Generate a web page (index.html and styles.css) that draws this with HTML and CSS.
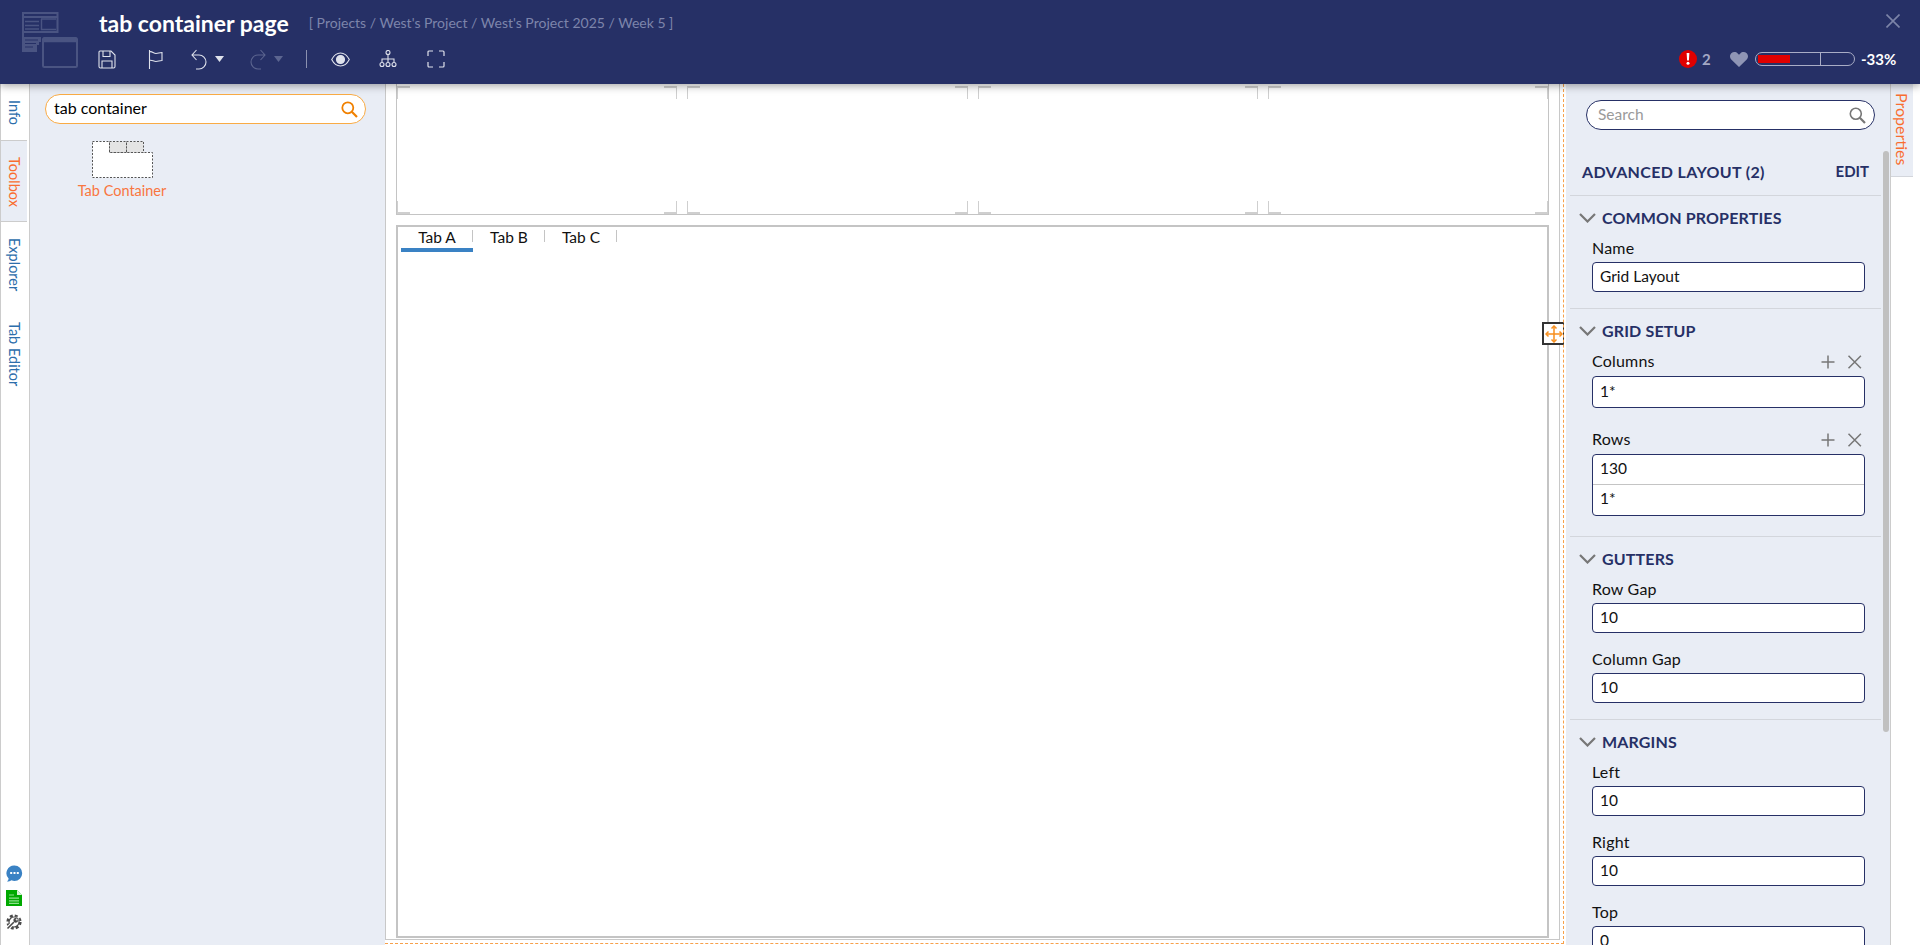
FILE: index.html
```html
<!DOCTYPE html>
<html lang="en">
<head>
<meta charset="utf-8">
<title>tab container page</title>
<link rel="stylesheet" href="styles.css">
</head>
<body>
<header class="topbar">
  <svg class="logo" width="56" height="56" viewBox="0 0 56 56" fill="none" stroke="#4a5482">
    <path d="M1 1h35M1 5h35" stroke-width="2"/>
    <path d="M1 0v40M35.500 0v21M1 20h34" stroke-width="2"/>
    <path d="M3 9.500h14M3 13.500h14M3 17h14M19 7h15M19 17.500h15M19.500 7v11" stroke-width="1.400"/>
    <path d="M0 25h19v5h-2v3h-2v7H0z" fill="#4a5482" stroke="none"/>
    <path d="M3 28h13M3 31.500h11M3 35h8" stroke="#263066" stroke-width="1.200"/>
    <rect x="21" y="26" width="34" height="29" rx="1.500" fill="#263066" stroke-width="2"/>
    <path d="M21 28h34" stroke-width="4.500"/>
  </svg>
  <div class="top-main">
    <div class="title-row">
      <h1 class="page-title">tab container page</h1>
      <span class="crumbs">[ Projects / West's Project / West's Project 2025 / Week 5 ]</span>
    </div>
    <div class="toolbar">
      <svg class="tool" width="18" height="19" viewBox="0 0 18 19" fill="none" stroke="#dfe2ec" stroke-width="1.100"><path d="M2 1h11l4 4v11.500a1.500 1.500 0 0 1-1.500 1.500h-13A1.500 1.500 0 0 1 1 16.500V2a1 1 0 0 1 1-1z"/><path d="M5 1v5.500h7V1M4 18v-7h10v7"/></svg>
      <svg class="tool" width="16" height="19" viewBox="0 0 16 19" fill="none" stroke="#dfe2ec" stroke-width="1.100"><path d="M1.500 0v19M1.500 2c2-1.500 4 1.500 6.500 1.500 2.500 0 3-1 6-1v8c-3 0-3.500 1-6 1s-4.500-2-6.500-1"/></svg>
      <svg class="tool" width="16" height="21" viewBox="0 0 16 21" fill="none" stroke="#dfe2ec" stroke-width="1.100"><path d="M5.500 1 1 6l4.500 5M1 6h7a7 7 0 0 1 0 14H5"/></svg>
      <svg class="tool" width="9" height="6" viewBox="0 0 9 6"><path d="M0 0h9L4.500 6z" fill="#dfe2ec"/></svg>
      <svg class="tool" width="16" height="21" viewBox="0 0 16 21" fill="none" stroke="#5c6590" stroke-width="1.100"><path d="M10.500 1 15 6l-4.500 5M15 6H8a7 7 0 0 0 0 14h3"/></svg>
      <svg class="tool" width="9" height="6" viewBox="0 0 9 6"><path d="M0 0h9L4.500 6z" fill="#5c6590"/></svg>
      <span class="tool-sep"></span>
      <svg class="tool" width="19" height="15" viewBox="0 0 19 15" fill="none" stroke="#dfe2ec" stroke-width="1.100"><path d="M.7 7.500C3 3 6 1 9.500 1s6.500 2 8.800 6.500C16 12 13 14 9.500 14S3 12 .7 7.500z"/><circle cx="9.500" cy="7.500" r="4" fill="#dfe2ec"/></svg>
      <svg class="tool" width="18" height="18" viewBox="0 0 18 18" fill="none" stroke="#dfe2ec" stroke-width="1.100"><circle cx="9" cy="2.500" r="2"/><path d="M9 4.500V9M3 12V9h12v3M9 9v3"/><circle cx="3" cy="14.500" r="2"/><circle cx="9" cy="14.500" r="2"/><circle cx="15" cy="14.500" r="2"/></svg>
      <svg class="tool" width="18" height="18" viewBox="0 0 18 18" fill="none" stroke="#dfe2ec" stroke-width="1.200"><path d="M1 6V2a1 1 0 0 1 1-1h4M12 1h4a1 1 0 0 1 1 1v4M17 12v4a1 1 0 0 1-1 1h-4M6 17H2a1 1 0 0 1-1-1v-4"/></svg>
    </div>
  </div>
  <div class="top-side">
    <svg class="close-x" width="14" height="14" viewBox="0 0 14 14" stroke="#7c84a8" stroke-width="1.600"><path d="M.5.5l13 13M13.500.5l-13 13"/></svg>
    <div class="status">
      <svg width="18" height="18" viewBox="0 0 18 18"><circle cx="9" cy="9" r="9" fill="#e00000"/><path d="M7.600 3h2.800l-.5 7.500H8.100z" fill="#fff"/><circle cx="9" cy="13.200" r="1.500" fill="#fff"/></svg>
      <span class="alert-count">2</span>
      <svg class="heart" width="18" height="15" viewBox="0 0 18 15"><path d="M9 15 1.500 7.800C-.5 5.800-.4 2.900 1.300 1.300 3.100-.4 6-.3 7.700 1.400L9 2.800l1.300-1.400C12-.3 14.900-.4 16.700 1.300c1.700 1.600 1.800 4.500-.2 6.500z" fill="#8f95b5"/></svg>
      <div class="meter"><span class="meter-fill"></span><span class="meter-tick"></span></div>
      <span class="pct">-33%</span>
    </div>
  </div>
</header>

<main class="workspace">
  <nav class="rail">
    <a class="rail-tab rail-info">Info</a>
    <a class="rail-tab rail-active rail-toolbox">Toolbox</a>
    <a class="rail-tab rail-explorer">Explorer</a>
    <a class="rail-tab rail-editor">Tab Editor</a>
    <div class="rail-icons">
      <svg width="17" height="17" viewBox="0 0 17 17"><path d="M8.500.5a7.700 7.700 0 0 1 0 15.400c-1 0-2-.2-3-.6-1.200.9-2.600 1.200-4.500 1.200 1-.8 1.500-1.800 1.600-3A7.700 7.700 0 0 1 8.500.5z" fill="#3a82c4"/><path d="M4.200 7h2v2h-2zM7.500 7h2v2h-2zM10.800 7h2v2h-2z" fill="#fff"/></svg>
      <svg width="16" height="16" viewBox="0 0 16 16"><path d="M0 0h11l5 5v11H0z" fill="#00a900"/><path d="M11 0v5h5z" fill="#d6f2d6"/><path d="M3 4.500h5v1H3zM3 7.500h10v1.300H3zM3 10.200h10v1.300H3zM3 12.800h10v1.300H3z" fill="#8ee08e"/></svg>
      <svg width="16" height="16" viewBox="0 0 16 16" fill="none"><circle cx="8" cy="8" r="6.300" stroke="#4a4a4a" stroke-width="2.600" stroke-dasharray="2.900 2.050"/><circle cx="8" cy="8" r="5" stroke="#4a4a4a" stroke-width="1.200"/><path d="M1 15 8 8" stroke="#fff" stroke-width="3.800"/><path d="M1.500 14.500 8 8" stroke="#4a4a4a" stroke-width="1.600"/><path d="M7.200 7.300a3.400 3.400 0 0 1 4.700-3.900L10 5.400l.8 1 2-1.800a3.400 3.400 0 0 1-3.900 4.300z" fill="#4a4a4a" stroke="#fff" stroke-width=".5"/></svg>
    </div>
  </nav>

  <aside class="toolbox">
    <div class="tool-search">
      <span class="tool-search-text">tab container</span>
      <svg width="17" height="17" viewBox="0 0 17 17" fill="none" stroke="#f08000" stroke-width="1.800"><circle cx="6.800" cy="6.800" r="5.500"/><path d="M10.800 10.800 16 16" stroke-width="2.200"/></svg>
    </div>
    <div class="tool-item">
      <svg class="tc-icon" width="61" height="37" viewBox="0 0 61 37" stroke="#555" stroke-dasharray="2 1.500">
        <path d="M.5.500h17v11h43v25H.5z" fill="#fff"/>
        <rect x="17.500" y=".5" width="17" height="11" fill="#e4e4e4"/>
        <rect x="34.500" y=".5" width="17" height="11" fill="#e4e4e4"/>
      </svg>
      <span class="tool-item-label">Tab Container</span>
    </div>
  </aside>

  <section class="canvas">
    <div class="page">
      <div class="upper">
        <div class="cell"><i class="mk tl"></i><i class="mk tr"></i><i class="mk bl"></i><i class="mk br"></i></div>
        <div class="cell"><i class="mk tl"></i><i class="mk tr"></i><i class="mk bl"></i><i class="mk br"></i></div>
        <div class="cell"><i class="mk tl"></i><i class="mk tr"></i><i class="mk bl"></i><i class="mk br"></i></div>
        <div class="cell"><i class="mk tl"></i><i class="mk tr"></i><i class="mk bl"></i><i class="mk br"></i></div>
      </div>
      <div class="lower">
        <div class="tabs">
          <span class="tab tab-on">Tab A</span>
          <span class="tab">Tab B</span>
          <span class="tab">Tab C</span>
        </div>
      </div>
    </div>
    <div class="mover">
      <svg width="18" height="18" viewBox="0 0 18 18" fill="none" stroke="#f78f1e" stroke-width="1.500"><path d="M1.500 9h15M9 1.500v15"/><path d="M6.500 3.500 9 1l2.500 2.500M6.500 14.500 9 17l2.500-2.500M3.500 6.500 1 9l2.500 2.500M14.500 6.500 17 9l-2.500 2.500"/></svg>
    </div>
  </section>

  <aside class="props">
    <div class="prop-search">
      <span class="prop-search-text">Search</span>
      <svg width="17" height="17" viewBox="0 0 17 17" fill="none" stroke="#777" stroke-width="1.600"><circle cx="6.800" cy="6.800" r="5.500"/><path d="M10.800 10.800 16 16" stroke-width="2.200"/></svg>
    </div>
    <div class="prop-title">
      <h2 class="prop-heading">ADVANCED LAYOUT (2)</h2>
      <span class="prop-edit">EDIT</span>
    </div>

    <section class="group">
      <h3 class="group-head"><svg class="chev" width="17" height="10" viewBox="0 0 17 10" fill="none" stroke="#777" stroke-width="2.200"><path d="M1 1l7.500 7.500L16 1"/></svg>COMMON PROPERTIES</h3>
      <div class="field"><label class="label">Name</label><div class="input">Grid Layout</div></div>
    </section>

    <section class="group">
      <h3 class="group-head"><svg class="chev" width="17" height="10" viewBox="0 0 17 10" fill="none" stroke="#777" stroke-width="2.200"><path d="M1 1l7.500 7.500L16 1"/></svg>GRID SETUP</h3>
      <div class="field field-grid">
        <div class="label-row"><label class="label">Columns</label>
          <svg width="41" height="14" viewBox="0 0 41 14" fill="none" stroke="#777" stroke-width="1.500"><path d="M7 .5v13M.5 7h13M27.500.8l12.400 12.400M39.900.8 27.500 13.200"/></svg></div>
        <div class="input input-tall">1*</div>
      </div>
      <div class="field field-grid">
        <div class="label-row"><label class="label">Rows</label>
          <svg width="41" height="14" viewBox="0 0 41 14" fill="none" stroke="#777" stroke-width="1.500"><path d="M7 .5v13M.5 7h13M27.500.8l12.400 12.400M39.900.8 27.500 13.200"/></svg></div>
        <div class="list"><div class="list-item">130</div><div class="list-item">1*</div></div>
      </div>
    </section>

    <section class="group">
      <h3 class="group-head"><svg class="chev" width="17" height="10" viewBox="0 0 17 10" fill="none" stroke="#777" stroke-width="2.200"><path d="M1 1l7.500 7.500L16 1"/></svg>GUTTERS</h3>
      <div class="field"><label class="label">Row Gap</label><div class="input">10</div></div>
      <div class="field"><label class="label">Column Gap</label><div class="input">10</div></div>
    </section>

    <section class="group">
      <h3 class="group-head"><svg class="chev" width="17" height="10" viewBox="0 0 17 10" fill="none" stroke="#777" stroke-width="2.200"><path d="M1 1l7.500 7.500L16 1"/></svg>MARGINS</h3>
      <div class="field"><label class="label">Left</label><div class="input">10</div></div>
      <div class="field"><label class="label">Right</label><div class="input">10</div></div>
      <div class="field"><label class="label">Top</label><div class="input">0</div></div>
    </section>
    <div class="scrollbar"></div>
  </aside>

  <nav class="rail-right">
    <a class="rail-right-tab">Properties</a>
  </nav>
</main>
</body>
</html>
```

FILE: styles.css
```css
* { box-sizing: border-box; }
html, body { margin: 0; height: 100%; overflow: hidden; }
body {
  display: flex;
  flex-direction: column;
  height: 945px;
  font-family: "Lato", "Noto Sans", sans-serif;
  font-size: 15px;
  color: #111;
  background: #fff;
}
h1, h2, h3 { margin: 0; }

/* Header */
.topbar {
  position: relative;
  z-index: 5;
  display: flex;
  flex: 0 0 84px;
  background: #263066;
  box-shadow: 0 2px 8px rgba(0, 0, 0, .35);
}
.logo { flex: none; margin: 12px 0 0 22px; }
.top-main { margin-left: 20px; }
.title-row { display: flex; align-items: center; height: 46px; padding-left: 1px; }
.page-title { font-size: 23px; font-weight: 700; color: #fff; line-height: 30px; }
.crumbs { margin: 0 0 2px 20px; font-size: 14px; color: #7d85ab; white-space: nowrap; }
.toolbar {
  display: grid;
  grid-template-columns: 50px 43px 24px 35px 24px 32px 25px 48px 48px 18px;
  align-items: center;
  height: 26px;
}
.tool { display: block; }
.tool-sep { width: 1px; height: 18px; background: #8b91b0; }
.top-side { display: flex; flex-direction: column; align-items: flex-end; margin-left: auto; padding: 14px 20px 0 0; }
.close-x { display: block; }
.status { display: flex; align-items: center; height: 18px; margin: 22px 3px 0 0; }
.alert-count { width: 33px; padding-left: 5px; font-size: 15px; font-weight: 700; color: #a3a8c4; }
.meter {
  position: relative;
  width: 100px;
  height: 14px;
  margin-left: 7px;
  border: 1px solid #a9adc6;
  border-radius: 7px;
}
.meter-fill { position: absolute; left: 2px; top: 2px; width: 32px; height: 8px; background: #e00000; }
.meter-tick { position: absolute; left: 64px; top: 0; width: 1px; height: 12px; background: #a9adc6; }
.pct { width: 36px; margin-left: 6px; font-size: 15px; font-weight: 700; color: #fff; white-space: nowrap; }

/* Workspace */
.workspace { display: flex; flex: 1; min-height: 0; }

.rail {
  position: relative;
  flex: 0 0 30px;
  border-left: 1px solid #ccc;
  border-right: 1px solid #ccc;
  background: #fff;
}
.rail-tab {
  display: block;
  writing-mode: vertical-rl;
  font-size: 14.500px;
  line-height: 26px;
  color: #2d6eab;
  text-align: left;
}
.rail-info { height: 56px; padding-top: 16px; }
.rail-toolbox { height: 82px; padding-top: 16px; }
.rail-explorer { height: 84px; padding-top: 16px; }
.rail-editor { padding-top: 16px; }
.rail-active { color: #f96d30; background: #e9edf5; border-top: 1px solid #ccc; border-bottom: 1px solid #ccc; }
.rail-icons { position: absolute; left: 5px; bottom: 15px; display: flex; flex-direction: column; gap: 8px; }
.rail-icons svg { display: block; }

.toolbox {
  flex: 0 0 355px;
  padding: 10px 0 0 15px;
  background: #e9edf5;
}
.tool-search {
  display: flex;
  align-items: center;
  justify-content: space-between;
  width: 321px;
  height: 30px;
  padding: 0 7px 0 8px;
  background: #fff;
  border: 1px solid #f9ab45;
  border-radius: 15px;
}
.tool-search-text { padding-bottom: 3px; font-size: 16px; color: #000; }
.tool-item { display: flex; flex-direction: column; align-items: center; width: 90px; margin: 17px 0 0 32px; }
.tc-icon { display: block; }
.tool-item-label { margin-top: 3px; font-size: 14.500px; line-height: 20px; color: #f9763f; white-space: nowrap; }

/* Canvas */
.canvas { position: relative; display: flex; flex: 1; min-width: 0; padding-right: 6px; background: #fff; }
.page {
  display: grid;
  grid-template-rows: 131px 1fr;
  row-gap: 10px;
  flex: 1;
  min-width: 0;
  height: 856px;
  padding: 0 10px 1px 10px;
  border-left: 1px solid #c8c8c8;
  border-right: 1px solid #c8c8c8;
  border-bottom: 1px solid #c8c8c8;
}
.canvas::after {
  content: "";
  position: absolute;
  left: 0;
  right: 2px;
  top: 0;
  bottom: 1px;
  border-right: 1px dashed #f7a04a;
  border-bottom: 1px dashed #f7a04a;
  pointer-events: none;
}
.upper {
  display: grid;
  grid-template-columns: repeat(4, 1fr);
  column-gap: 10px;
  border-left: 1px solid #c4c4c4;
  border-right: 1px solid #c4c4c4;
  border-bottom: 1px solid #c4c4c4;
}
.cell { position: relative; }
.mk { position: absolute; width: 13px; height: 13px; border: 0 solid #cfcfcf; }
.tl { left: 0; top: 2px; border-top-width: 2px; border-left-width: 1px; }
.tr { right: 0; top: 2px; border-top-width: 2px; border-right-width: 1px; }
.bl { left: 0; bottom: 0; border-bottom-width: 2px; border-left-width: 1px; }
.br { right: 0; bottom: 0; border-bottom-width: 2px; border-right-width: 1px; }
.lower { border: 2px solid #c4c4c4; padding: 3px 0 0 3px; }
.tabs { display: flex; }
.tab {
  position: relative;
  width: 72px;
  height: 22px;
  font-size: 15.500px;
  line-height: 14px;
  text-align: center;
  color: #111;
}
.tab::after { content: ""; position: absolute; right: 0; top: 0; width: 1px; height: 12px; background: #c4c4c4; }
.tab-on { border-bottom: 4px solid #3a82c4; }
.mover {
  position: absolute;
  left: 1157px;
  top: 238px;
  display: flex;
  align-items: center;
  justify-content: center;
  width: 22px;
  height: 23px;
  background: #fff;
  border: 2px solid #333;
  border-right-width: 1px;
}

/* Properties */
.props {
  position: relative;
  flex: 0 0 325px;
  overflow: hidden;
  background: #e9edf5;
  border-right: 1px solid #ccc;
}
.prop-search {
  display: flex;
  align-items: center;
  justify-content: space-between;
  width: 289px;
  height: 30px;
  margin: 16px 0 0 20px;
  padding: 0 8px 0 11px;
  background: #fff;
  border: 1px solid #263066;
  border-radius: 15px;
}
.prop-search-text { padding-bottom: 2px; font-size: 15.500px; color: #9a9a9a; }
.prop-title {
  display: flex;
  align-items: center;
  justify-content: space-between;
  height: 24px;
  margin-top: 29px;
  padding: 0 21px 0 16px;
  margin-bottom: 12px;
  color: #263066;
}
.prop-heading { font-size: 16px; font-weight: 700; letter-spacing: .35px; }
.prop-edit { font-size: 15px; font-weight: 700; }
.group { margin: 0 9px 0 4px; border-top: 1px solid #d3d6dc; }
.group-head {
  display: flex;
  align-items: center;
  height: 20px;
  margin: 12px 0 10px 9px;
  padding-bottom: 2px;
  font-size: 16px;
  font-weight: 700;
  letter-spacing: .15px;
  color: #263066;
}
.chev { flex: none; margin: 2px 6px 0 0; }
.field { margin: 0 16px 16px 22px; }
.label { display: block; height: 20px; margin-bottom: 4px; font-size: 16px; line-height: 20px; letter-spacing: .2px; color: #111; }
.input {
  height: 30px;
  padding: 0 7px;
  background: #fff;
  border: 1px solid #263066;
  border-radius: 4px;
  font-size: 15.500px;
  line-height: 27px;
}
.input-tall { height: 32px; line-height: 28px; }
.field-grid { margin-bottom: 20px; }
.field-grid + .field-grid { margin-top: 21px; }
.label-row { display: flex; align-items: center; justify-content: space-between; height: 21px; margin-bottom: 4px; padding-right: 3px; }
.label-row .label { margin-bottom: 0; line-height: 18px; }
.list { height: 62px; background: #fff; border: 1px solid #263066; border-radius: 4px; font-size: 15.500px; }
.list-item { height: 30px; padding: 0 7px; line-height: 27px; }
.list-item:first-child { border-bottom: 1px solid #c4c4c4; }
.scrollbar { position: absolute; right: 1px; top: 67px; width: 6px; height: 581px; background: #c0c0c0; border-radius: 3px; }

.rail-right { flex: 0 0 29px; background: #fff; }
.rail-right-tab {
  display: block;
  height: 93px;
  padding-top: 9px;
  writing-mode: vertical-rl;
  font-size: 16px;
  line-height: 22px;
  color: #f96d30;
  background: #e9edf5;
  border-bottom: 1px solid #d3d6dc;
}
```
